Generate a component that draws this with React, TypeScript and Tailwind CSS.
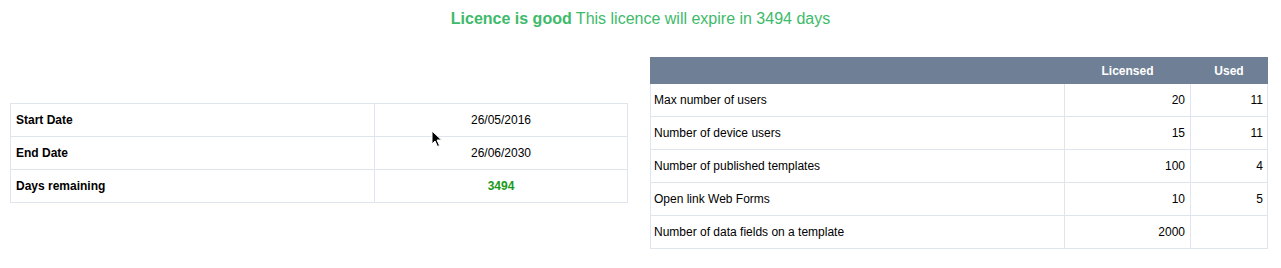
import React from "react"

const summary = [
  { label: "Start Date", value: "26/05/2016" },
  { label: "End Date", value: "26/06/2030" },
  { label: "Days remaining", value: "3494", green: true },
]

const limits = [
  { label: "Max number of users", licensed: "20", used: "11" },
  { label: "Number of device users", licensed: "15", used: "11" },
  { label: "Number of published templates", licensed: "100", used: "4" },
  { label: "Open link Web Forms", licensed: "10", used: "5" },
  { label: "Number of data fields on a template", licensed: "2000", used: "" },
]

export default function App() {
  return (
    <div className="relative w-[1281px] h-[268px] bg-white text-[12px] text-black font-['Liberation_Sans',Arial,sans-serif]">
      {/* Bandeau statut licence */}
      <div className="pt-[10px] text-center text-[16px] leading-[18px] text-[#3dba6a]">
        <span className="font-bold">Licence is good</span> This licence will expire in 3494 days
      </div>

      <div className="flex items-center gap-[22px] pl-[10px] pr-[13px] mt-[29px]">
        {/* Dates */}
        <table className="w-[618px] border-collapse">
          <tbody>
            {summary.map((r) => (
              <tr key={r.label} className="h-[33px]">
                <td className="w-[364px] border border-[#dfe5ec] px-[5px] font-bold">{r.label}</td>
                <td
                  className={`border border-[#dfe5ec] px-[5px] text-center ${
                    r.green ? "font-bold text-[#1a9a1a]" : ""
                  }`}
                >
                  {r.value}
                </td>
              </tr>
            ))}
          </tbody>
        </table>

        {/* Limites */}
        <table className="w-[618px] border-collapse">
          <thead>
            <tr className="h-[26px] bg-[#6f7f96] text-white font-bold">
              <th className="border border-[#6f7f96]"></th>
              <th className="w-[126px] border border-[#6f7f96] text-center">Licensed</th>
              <th className="w-[77px] border border-[#6f7f96] text-center">Used</th>
            </tr>
          </thead>
          <tbody>
            {limits.map((r) => (
              <tr key={r.label} className="h-[33px]">
                <td className="border border-[#dfe5ec] pl-[3px] pr-[5px]">{r.label}</td>
                <td className="border border-[#dfe5ec] px-[5px] text-right">{r.licensed}</td>
                <td className="border border-[#dfe5ec] px-[4px] text-right">{r.used}</td>
              </tr>
            ))}
          </tbody>
        </table>
      </div>

      {/* Curseur */}
      <svg className="absolute left-[431px] top-[130px]" width="12" height="18" viewBox="0 0 12 18">
        <path d="M1 1 L1 14 L4 11 L6.5 16.5 L8.5 15.5 L6 10 L10.5 10 Z" fill="#000" stroke="#fff" strokeWidth="1" />
      </svg>
    </div>
  )
}
